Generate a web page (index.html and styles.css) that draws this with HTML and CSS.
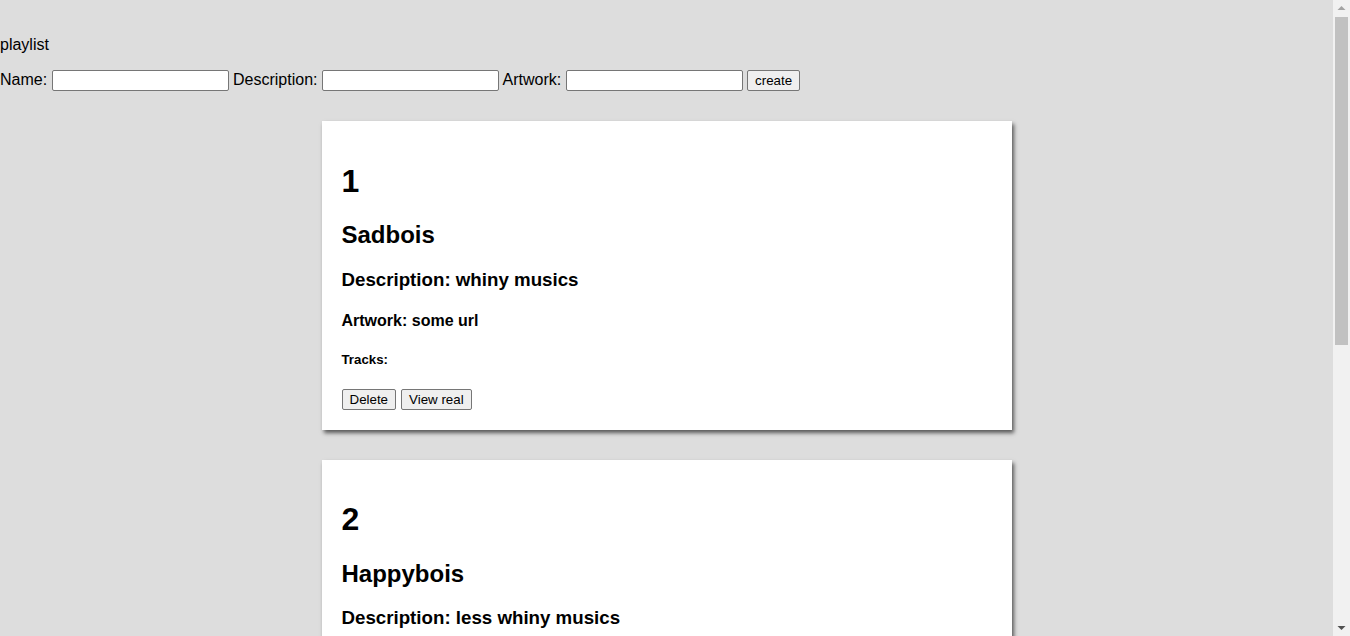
FILE: index.html
```html
<!DOCTYPE html>
<html>
<head>
<meta charset="utf-8">
<title>playlist</title>
<link rel="stylesheet" href="styles.css">
</head>
<body>
<div class="app">
  <p class="title">playlist</p>
  <form class="create-form">
    <label>Name: <input class="field" type="text"></label>
    <label>Description: <input class="field" type="text"></label>
    <label>Artwork: <input class="field" type="text"></label>
    <button class="btn create" type="button">create</button>
  </form>
  <div class="list">
    <div class="card">
      <h1>1</h1>
      <h2>Sadbois</h2>
      <h3>Description: whiny musics</h3>
      <h4>Artwork: some url</h4>
      <h5>Tracks:</h5>
      <div class="actions"><button class="btn" type="button">Delete</button><button class="btn" type="button">View real</button></div>
    </div>
    <div class="card">
      <h1>2</h1>
      <h2>Happybois</h2>
      <h3>Description: less whiny musics</h3>
      <h4>Artwork: some url</h4>
      <h5>Tracks:</h5>
      <div class="actions"><button class="btn" type="button">Delete</button><button class="btn" type="button">View real</button></div>
    </div>
    <div class="card">
      <h1>3</h1>
      <h2>Chillbois</h2>
      <h3>Description: calm musics</h3>
      <h4>Artwork: some url</h4>
      <h5>Tracks:</h5>
      <div class="actions"><button class="btn" type="button">Delete</button><button class="btn" type="button">View real</button></div>
    </div>
  </div>
</div>
<div class="scrollbar" aria-hidden="true">
  <div class="sb-arrow">
    <svg width="17" height="17" viewBox="0 0 17 17"><path d="M4.5 10 L8.5 6 L12.5 10 Z" fill="#a3a3a3"/></svg>
  </div>
  <div class="sb-track"><div class="sb-thumb"></div></div>
  <div class="sb-arrow">
    <svg width="17" height="17" viewBox="0 0 17 17"><path d="M4.5 7 L8.5 11 L12.5 7 Z" fill="#505050"/></svg>
  </div>
</div>
</body>
</html>
```
FILE: styles.css
```css
html, body {
  margin: 0;
  padding: 0;
}
body {
  background: #dddddd;
  font-family: "Liberation Sans", Arial, sans-serif;
  font-size: 16px;
  color: #000;
}
.app {
  padding-top: 20px;
  margin-right: 17px;
}
.title {
  margin: 16px 0 15px;
  line-height: 18px;
}
.create-form {
  margin: 0;
  line-height: 22px;
}
.field {
  box-sizing: border-box;
  width: 177px;
  height: 21px;
  padding: 1px 2px;
  border: 1px solid #767676;
  border-radius: 2px;
  background: #fff;
  font-family: "Liberation Sans", Arial, sans-serif;
  font-size: 13.33px;
  vertical-align: middle;
  margin: 0;
}
.btn {
  box-sizing: border-box;
  height: 21px;
  padding: 1px 7px;
  border: 1px solid #767676;
  border-radius: 2px;
  background: #efefef;
  color: #000;
  font-family: "Liberation Sans", Arial, sans-serif;
  font-size: 13.33px;
  margin: 0;
  vertical-align: middle;
}
.list {
  padding-top: 30px;
  padding-bottom: 30px;
}
.card {
  box-sizing: border-box;
  width: 690px;
  margin: 0 auto 30px;
  padding: 20px;
  background: #fff;
  box-shadow: 2px 3px 4px rgba(0, 0, 0, 0.6);
}
.card h1 { font-size: 32px; margin: 21.44px 0; }
.card h2 { font-size: 24px; margin: 19.92px 0; }
.card h3 { font-size: 18.72px; margin: 18.72px 0; }
.card h4 { font-size: 16px; margin: 21.28px 0; }
.card h5 { font-size: 13.28px; margin: 22.18px 0 21.18px; }
.actions {
  display: flex;
  gap: 5px;
  height: 21px;
}
.scrollbar {
  position: fixed;
  top: 0;
  right: 0;
  bottom: 0;
  width: 17px;
  background: #f1f1f1;
  display: flex;
  flex-direction: column;
}
.sb-arrow {
  height: 17px;
  flex: none;
}
.sb-arrow svg {
  display: block;
}
.sb-track {
  flex: 1;
  padding: 0 2px;
}
.sb-thumb {
  height: 328px;
  background: #c1c1c1;
}
```
